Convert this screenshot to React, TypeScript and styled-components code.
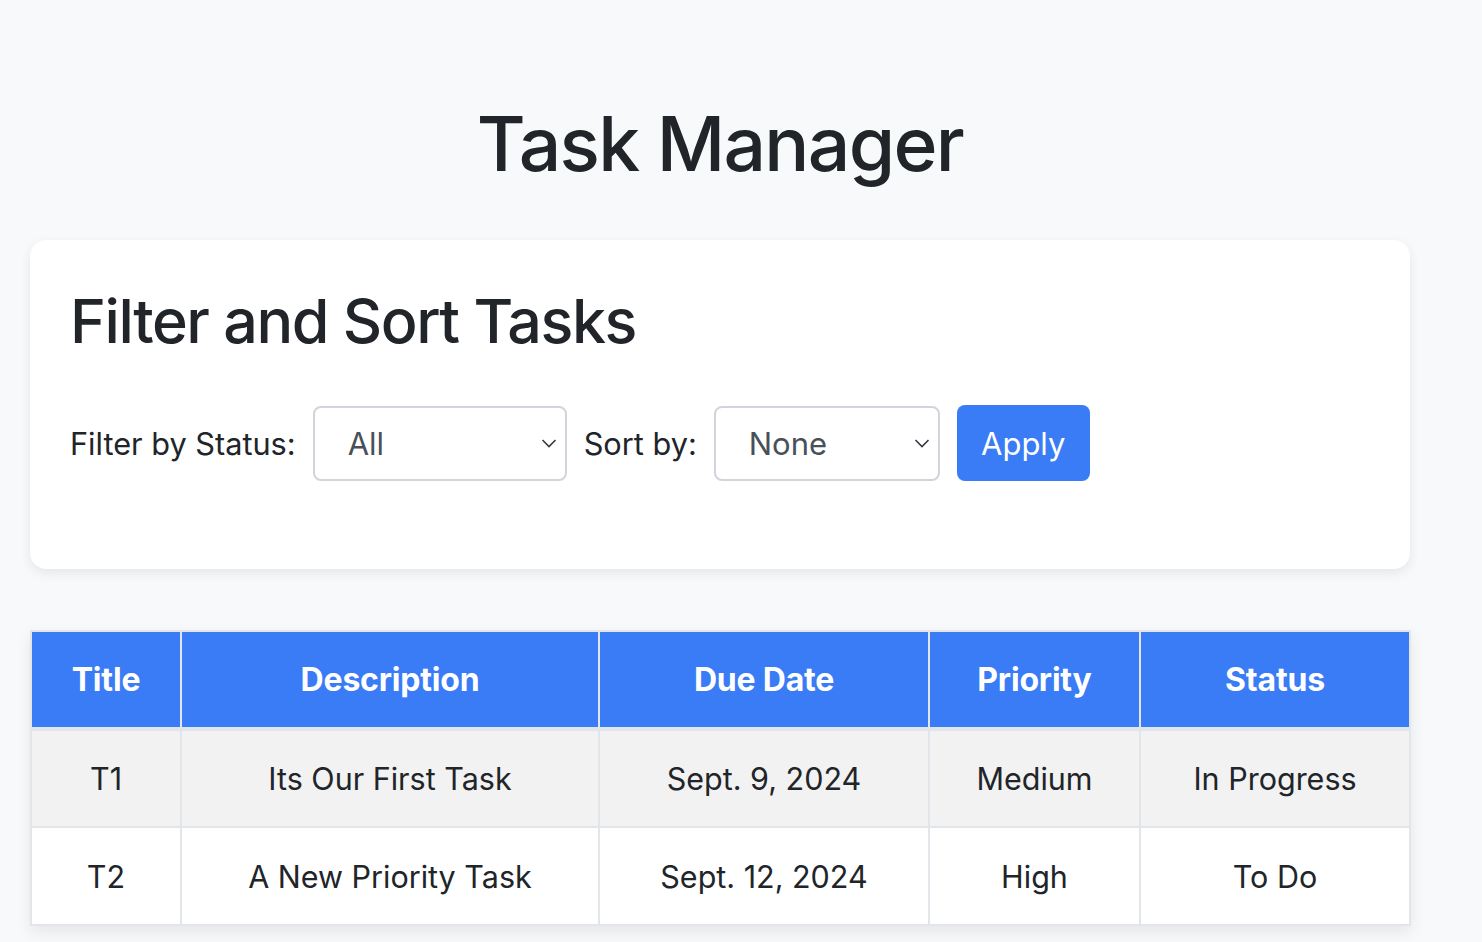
import React from "react";
import styled, { createGlobalStyle } from "styled-components";

const Global = createGlobalStyle`
  html, body { margin: 0; padding: 0; background: #f8f9fa; }
  body {
    font-family: Inter, "Noto Sans", "Liberation Sans", sans-serif;
    color: #212529;
    -webkit-font-smoothing: antialiased;
  }
  * { box-sizing: border-box; }
`;

const Page = styled.div`
  width: 1482px;
  min-height: 942px;
  padding: 0 72px 0 30px;
`;

const Container = styled.div`
  width: 1380px;
`;

const Title = styled.h1`
  margin: 0;
  padding-top: 99px;
  font-size: 75px;
  font-weight: 500;
  line-height: 1.2;
  text-align: center;
  letter-spacing: -1.7px;
`;

const Card = styled.section`
  margin-top: 51px;
  background: #fff;
  border-radius: 16px;
  box-shadow: 0 4px 12px rgba(0, 0, 0, 0.08);
  padding: 45px 40px 88px 40px;
`;

const CardTitle = styled.h2`
  margin: 0 0 47px 0;
  font-size: 61px;
  font-weight: 500;
  line-height: 1.2;
  letter-spacing: -1.45px;
`;

const FormRow = styled.div`
  display: flex;
  align-items: center;
  gap: 17px;
`;

const Label = styled.label`
  font-size: 30.7px;
  color: #212529;
`;

const SelectBox = styled.div<{ $w: number }>`
  position: relative;
  width: ${(p) => p.$w}px;
  height: 75px;
  border: 2px solid #d1d5db;
  border-radius: 8px;
  background: #fff;
  display: flex;
  align-items: center;
  padding-left: 33px;
  font-size: 31px;
  color: #495057;
`;

const Chevron = styled.svg`
  position: absolute;
  right: 8px;
  top: 50%;
  margin-top: -7px;
  width: 16px;
  height: 14px;
`;

const ApplyButton = styled.button`
  height: 76px;
  width: 133px;
  border: none;
  border-radius: 8px;
  background: #3a7bf6;
  color: #fff;
  font-family: inherit;
  font-size: 31px;
  padding: 0;
`;

const Table = styled.table`
  margin-top: 61px;
  width: 1379px;
  border-collapse: collapse;
  table-layout: fixed;
  box-shadow: 0 6px 14px rgba(0, 0, 0, 0.08);
  border: 2px solid #e2e5e9;
`;

const Th = styled.th`
  background: #3a7bf6;
  color: #fff;
  font-size: 32px;
  font-weight: 700;
  height: 98px;
  border: 2px solid #e2e5e9;
  border-bottom-width: 4px;
  text-align: center;
  letter-spacing: -0.2px;
`;

const Row = styled.tr<{ $alt?: boolean }>`
  background: ${(p) => (p.$alt ? "#f2f2f2" : "#fff")};
`;

const Td = styled.td`
  font-size: 30.5px;
  height: 98px;
  border: 2px solid #e2e5e9;
  text-align: center;
  color: #212529;
`;

const ChevronIcon = () => (
  <Chevron viewBox="0 0 16 14">
    <path d="M1.5 4 L8 10.5 L14.5 4" fill="none" stroke="#343a40" strokeWidth="1.6" />
  </Chevron>
);

const cols = [150, 418, 330, 211, 270];

const tasks = [
  ["T1", "Its Our First Task", "Sept. 9, 2024", "Medium", "In Progress"],
  ["T2", "A New Priority Task", "Sept. 12, 2024", "High", "To Do"],
];

export default function App() {
  return (
    <>
      <Global />
      <Page>
        <Container>
          <Title>Task Manager</Title>
          <Card>
            <CardTitle>Filter and Sort Tasks</CardTitle>
            <FormRow>
              <Label>Filter by Status:</Label>
              <SelectBox $w={254}>
                All
                <ChevronIcon />
              </SelectBox>
              <Label>Sort by:</Label>
              <SelectBox $w={226}>
                None
                <ChevronIcon />
              </SelectBox>
              <ApplyButton>Apply</ApplyButton>
            </FormRow>
          </Card>
          <Table>
            <colgroup>
              {cols.map((w, i) => (
                <col key={i} style={{ width: w }} />
              ))}
            </colgroup>
            <thead>
              <tr>
                <Th>Title</Th>
                <Th>Description</Th>
                <Th>Due Date</Th>
                <Th>Priority</Th>
                <Th>Status</Th>
              </tr>
            </thead>
            <tbody>
              {tasks.map((t, i) => (
                <Row key={i} $alt={i === 0}>
                  {t.map((c, j) => (
                    <Td key={j}>{c}</Td>
                  ))}
                </Row>
              ))}
            </tbody>
          </Table>
        </Container>
      </Page>
    </>
  );
}
